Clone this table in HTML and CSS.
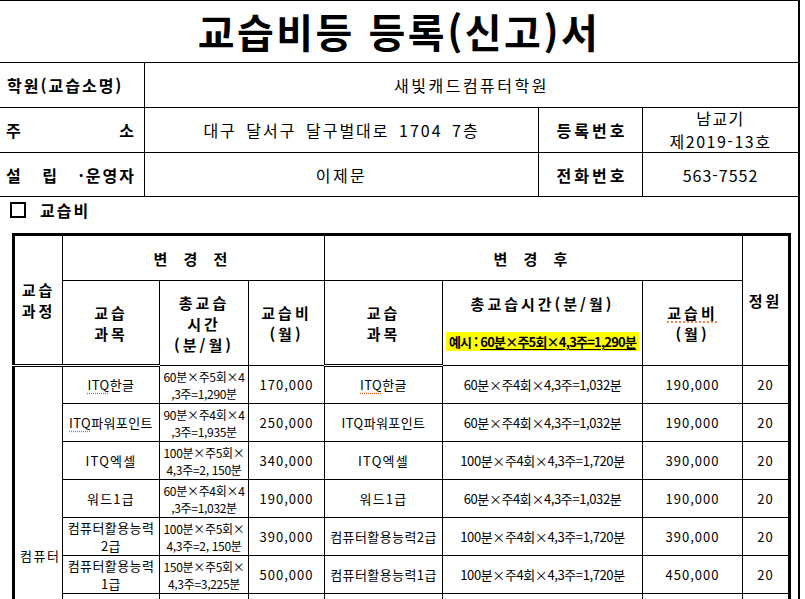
FILE: index.html
```html
<!DOCTYPE html>
<html lang="ko">
<head>
<meta charset="utf-8">
<title>교습비등 등록(신고)서</title>
<link rel="stylesheet" href="styles.css">
</head>
<body>
<div class="page">
  <div class="title">교습비등 등록(신고)서</div>
  <div class="info">
    <div class="cell label br">학원(교습소명)</div>
    <div class="cell value span3">새빛캐드컴퓨터학원</div>

    <div class="cell label br spread"><span>주</span><span>소</span></div>
    <div class="cell value br addr">대구 달서구 달구벌대로 1704 7층</div>
    <div class="cell label2 br">등록번호</div>
    <div class="cell value reg">남교기<br>제2019-13호</div>

    <div class="cell label br spread last"><span>설</span><span>립</span><span>·운영자</span></div>
    <div class="cell value br last">이제문</div>
    <div class="cell label2 br last">전화번호</div>
    <div class="cell value tel last">563-7552</div>
  </div>

  <div class="section">
    <span class="box"></span>
    <span class="section-title">교습비</span>
  </div>

  <div class="table-wrap">
    <table class="fee">
      <colgroup>
        <col class="c1"><col class="c2"><col class="c3"><col class="c4">
        <col class="c5"><col class="c6"><col class="c7"><col class="c8">
      </colgroup>
      <thead>
        <tr class="hr1">
          <th rowspan="2" class="dbl">교습<br>과정</th>
          <th colspan="3" class="grp">변 경 전</th>
          <th colspan="3" class="grp">변 경 후</th>
          <th rowspan="2">정원</th>
        </tr>
        <tr class="hr2">
          <th class="dbl">교습<br>과목</th>
          <th>총교습<br>시간<br>(분/월)</th>
          <th>교습비<br>(월)</th>
          <th class="dbl">교습<br>과목</th>
          <th class="total">
            <div class="total-in">
              <span>총교습시간(분/월)</span>
              <span class="ex">예시 : <u>60분×주5회×4,3주=1,290분</u></span>
            </div>
          </th>
          <th><span class="spell">교습비</span><br>(월)</th>
        </tr>
      </thead>
      <tbody>
        <tr>
          <td rowspan="10" class="course">컴퓨터</td>
          <td class="name"><span class="spell">ITQ</span>한글</td>
          <td class="time">60분×주5회×4<br>,3주=1,290분</td>
          <td class="num">170,000</td>
          <td class="name"><span class="spell">ITQ</span>한글</td>
          <td class="time2">60분×주4회×4,3주=1,032분</td>
          <td class="num">190,000</td>
          <td class="num">20</td>
        </tr>
        <tr>
          <td class="name"><span class="spell">ITQ</span>파워포인트</td>
          <td class="time">90분×주4회×4<br>,3주=1,935분</td>
          <td class="num">250,000</td>
          <td class="name">ITQ파워포인트</td>
          <td class="time2">60분×주4회×4,3주=1,032분</td>
          <td class="num">190,000</td>
          <td class="num">20</td>
        </tr>
        <tr>
          <td class="name wide">ITQ엑셀</td>
          <td class="time">100분×주5회×<br>4,3주=2, 150분</td>
          <td class="num">340,000</td>
          <td class="name wide">ITQ엑셀</td>
          <td class="time2">100분×주4회×4,3주=1,720분</td>
          <td class="num">390,000</td>
          <td class="num">20</td>
        </tr>
        <tr>
          <td class="name wide">워드1급</td>
          <td class="time">60분×주4회×4<br>,3주=1,032분</td>
          <td class="num">190,000</td>
          <td class="name wide">워드1급</td>
          <td class="time2">60분×주4회×4,3주=1,032분</td>
          <td class="num">190,000</td>
          <td class="num">20</td>
        </tr>
        <tr>
          <td class="name two">컴퓨터활용능력<br>2급</td>
          <td class="time">100분×주5회×<br>4,3주=2, 150분</td>
          <td class="num">390,000</td>
          <td class="name">컴퓨터활용능력2급</td>
          <td class="time2">100분×주4회×4,3주=1,720분</td>
          <td class="num">390,000</td>
          <td class="num">20</td>
        </tr>
        <tr>
          <td class="name two">컴퓨터활용능력<br>1급</td>
          <td class="time">150분×주5회×<br>4,3주=3,225분</td>
          <td class="num">500,000</td>
          <td class="name">컴퓨터활용능력1급</td>
          <td class="time2">100분×주4회×4,3주=1,720분</td>
          <td class="num">450,000</td>
          <td class="num">20</td>
        </tr>
        <tr><td></td><td></td><td></td><td></td><td></td><td></td><td></td></tr>
        <tr><td></td><td></td><td></td><td></td><td></td><td></td><td></td></tr>
        <tr><td></td><td></td><td></td><td></td><td></td><td></td><td></td></tr>
        <tr><td></td><td></td><td></td><td></td><td></td><td></td><td></td></tr>
      </tbody>
    </table>
  </div>
</div>
</body>
</html>
```
FILE: styles.css
```css
* { box-sizing: border-box; }

body {
  margin: 0;
  background: #fff;
  color: #000;
  font-family: "Noto Sans CJK KR", "Noto Sans", sans-serif;
}

.page {
  width: 800px;
  border-top: 1px solid #000;
  border-right: 2px solid #000;
  min-height: 900px;
}

.title {
  height: 62px;
  border-bottom: 1px solid #000;
  display: flex;
  align-items: center;
  justify-content: center;
  font-size: 40px;
  font-weight: 700;
  letter-spacing: 2.5px;
  padding-bottom: 1px;
}

.info {
  display: grid;
  grid-template-columns: 145px 394px 104px 1fr;
  grid-template-rows: 45px 45px 44px;
}

.cell {
  border-bottom: 1px solid #000;
  display: flex;
  align-items: center;
  justify-content: center;
  text-align: center;
}

.br { border-right: 1px solid #000; }
.span3 { grid-column: span 3; }

.label {
  justify-content: flex-start;
  padding: 0 8px 0 7px;
  font-size: 16px;
  font-weight: 700;
  letter-spacing: 2px;
}

.label.spread {
  justify-content: space-between;
  padding: 0 8px 0 6px;
  letter-spacing: 2px;
}

.label2 {
  font-size: 16px;
  font-weight: 700;
  letter-spacing: 3px;
  padding-left: 3px;
}

.value {
  font-size: 16px;
  font-weight: 400;
  letter-spacing: 2.5px;
  word-spacing: 3px;
}

.value.addr { letter-spacing: 2px; }

.value.reg {
  font-size: 16px;
  line-height: 23px;
  letter-spacing: 1.5px;
  padding-bottom: 1px;
}

.value.tel { letter-spacing: 1px; }

.section {
  height: 36px;
  display: flex;
  align-items: flex-start;
  padding: 5px 0 0 10px;
  gap: 14px;
}

.box {
  width: 16px;
  height: 16px;
  border: 2px solid #000;
}

.section-title {
  font-size: 16px;
  font-weight: 700;
  letter-spacing: 2px;
  line-height: 16px;
}

.table-wrap {
  padding-left: 12px;
}

.fee {
  border-collapse: collapse;
  table-layout: fixed;
  width: 776px;
  border: 3px solid #000;
}

.c1 { width: 49px; }
.c2 { width: 97px; }
.c3 { width: 89px; }
.c4 { width: 76px; }
.c5 { width: 118px; }
.c6 { width: 200px; }
.c7 { width: 100px; }
.c8 { width: 47px; }

.fee th,
.fee td {
  border: 1px solid #000;
  padding: 0;
  text-align: center;
  vertical-align: middle;
}

.fee th {
  font-size: 15px;
  font-weight: 700;
  letter-spacing: 3px;
  line-height: 21px;
}

.fee .grp { letter-spacing: 6px; }

.hr1 { height: 46px; }
.hr2 { height: 85px; }

.fee th.dbl { border-bottom: 3px double #000; }

.total-in {
  display: flex;
  flex-direction: column;
  align-items: center;
  gap: 18px;
  padding-bottom: 2px;
}

.ex {
  background: #ffff00;
  font-size: 13px;
  font-weight: 700;
  letter-spacing: -0.8px;
  line-height: 19px;
  padding: 0 3px;
}

.ex u { text-underline-offset: 2px; }

.spell {
  text-decoration: underline dotted #e8601c;
  text-underline-offset: 3px;
}

.fee tbody tr { height: 38px; }

.fee td {
  font-size: 13px;
  line-height: 16px;
  font-weight: 400;
}

.fee td.course {
  letter-spacing: 1.5px;
  text-align: left;
  padding-left: 5px;
}

.fee td.name { letter-spacing: 0.4px; }
.fee td.name.wide { letter-spacing: 1.2px; }
.fee td.name.two { line-height: 18px; }

.fee td.time {
  font-size: 12px;
  letter-spacing: -0.3px;
  line-height: 17px;
}

.fee td.time2 { letter-spacing: -0.4px; }

.fee td.num { letter-spacing: 1px; }
```
